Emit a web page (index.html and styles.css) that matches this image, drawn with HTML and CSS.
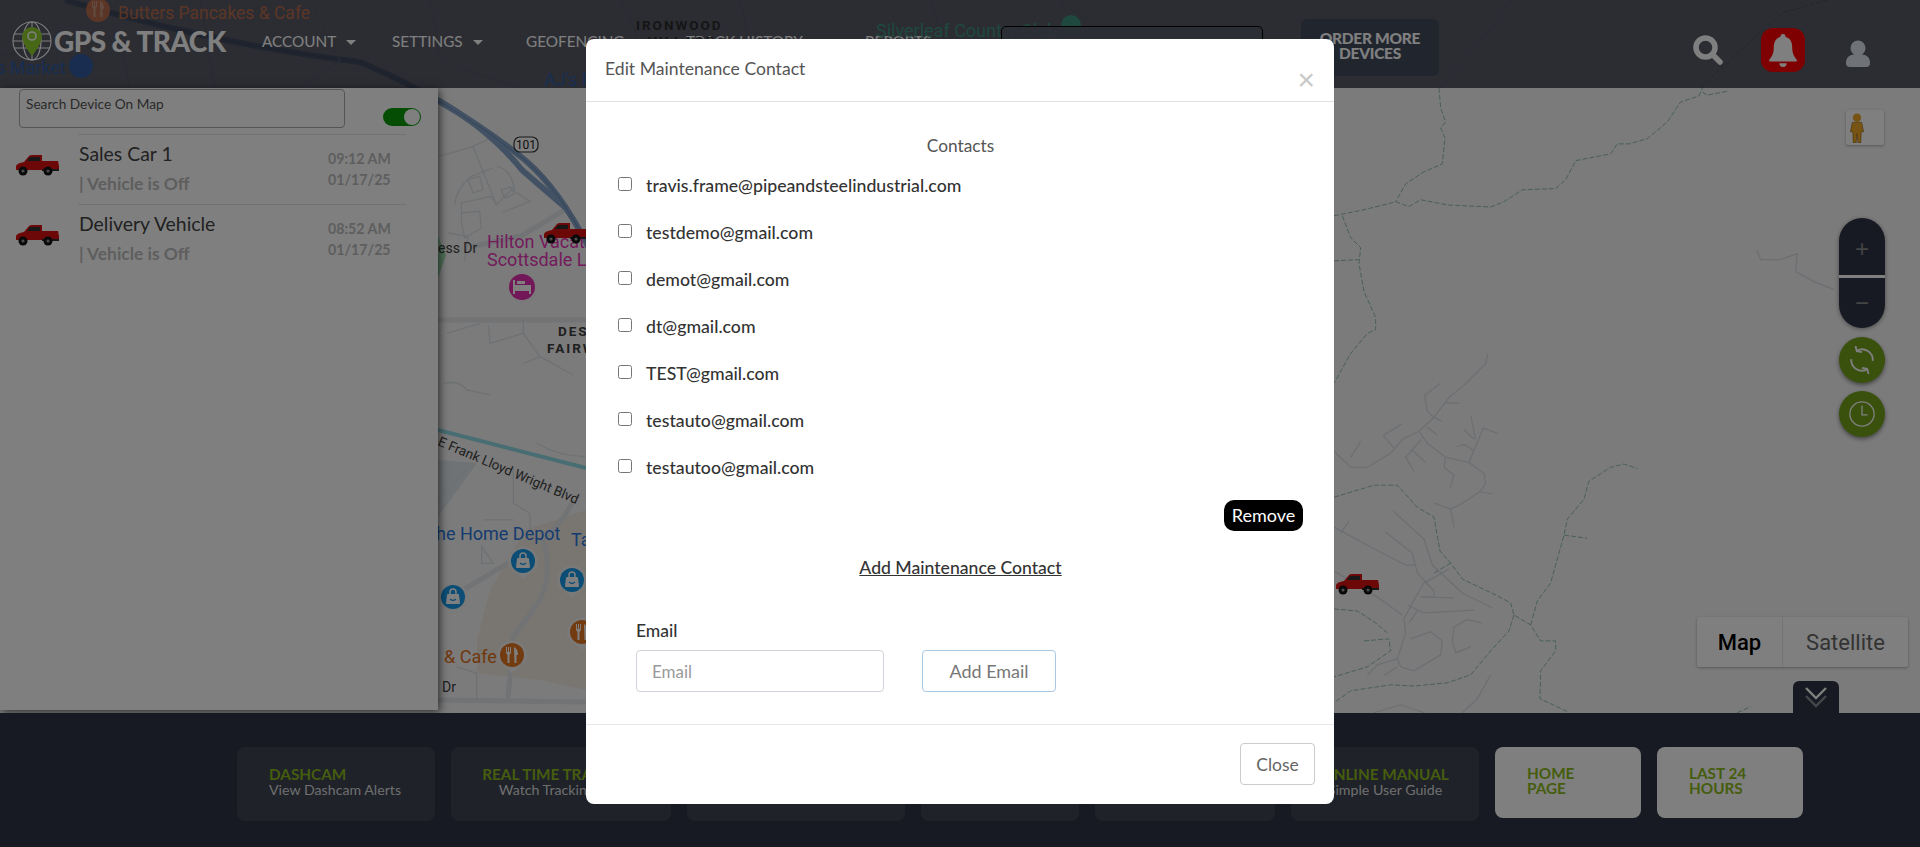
FILE: index.html
```html
<!DOCTYPE html>
<html lang="en">
<head>
    <meta charset="UTF-8">
    <meta name="viewport" content="width=device-width, initial-scale=1.0">
    <title>GPS &amp; Track</title>
    <link rel="stylesheet" href="styles.css">
</head>
<body>
<div class="page">

    <!-- map canvas, everything else sits on top of it -->
    <svg class="map" viewBox="0 0 1920 847" xmlns="http://www.w3.org/2000/svg">
        <defs>
            <g id="truck">
                <path fill="#d81010" d="M1 16 L1 12 Q2 9 9 8 L14 2 Q15 1 17 1 L27 1 L27 7 L43 7 L44 12 L44 16 Z"/>
                <path fill="#303030" d="M15 3 L25 3 L25 7 L12 7 Z M27 15 L44 15 L44 17 L27 17 Z"/>
                <circle fill="#111" cx="8" cy="17" r="4.5"/>
                <circle fill="#999" cx="8" cy="17" r="1.6"/>
                <circle fill="#111" cx="33" cy="17" r="4.5"/>
                <circle fill="#999" cx="33" cy="17" r="1.6"/>
            </g>
            <g id="bag">
                <path fill="#fff" d="M-6 -2 Q-6 -3 -5 -3 L5 -3 Q6 -3 6 -2 L7 6 Q7 7 6 7 L-6 7 Q-7 7 -7 6 Z"/>
                <path fill="none" stroke="#fff" stroke-width="1.5" d="M-3 -3 V-5 A3 3 0 0 1 3 -5 V-3"/>
                <path fill="none" stroke="#169bea" stroke-width="1.2" d="M-3 2 Q0 5 3 2"/>
            </g>
            <g id="fork">
                <path fill="#fff" d="M-6 -8 H-5 V-3 H-4 V-8 H-3 V-3 H-2 V-8 H-1 V-2 L-2.5 0 V8 H-4.5 V0 L-6 -2 Z"/>
                <path fill="#fff" d="M2 -8 Q6 -6 6 0 H4.5 V8 H2.5 Z"/>
            </g>
        </defs>

        <polygon class="map-tan" points="490,590 525,530 586,510 586,690 540,680 477,673 477,640"/>
        <polygon class="map-airport" points="438,460 477,463 438,517"/>
        <polygon class="map-green" points="438,236 446,255 438,278"/>

        <g class="road-wide">
            <path d="M438 320 L586 320"/>
            <path d="M438 700 L586 702"/>
            <path d="M573 500 Q567 517 543 540 Q553 573 540 600 L513 637 L508 700"/>
            <path d="M463 590 L513 560"/>
            <path d="M470 247 L521 236 L568 208"/>
        </g>

        <g class="road-thin" transform="translate(438 88) scale(.3333)">
            <path d="M0 205 Q60 190 105 175 Q150 155 180 135"/>
            <path d="M105 175 L175 350 L225 300"/>
            <path d="M175 235 Q220 240 230 310 L275 340 L190 375"/>
            <path d="M50 350 Q55 300 100 265 L165 240"/>
            <path d="M90 275 L125 265 L135 305 L105 315 Z"/>
            <path d="M190 305 L218 298 L228 318 L200 330 Z"/>
            <path d="M70 345 L160 325 L175 350"/>
            <path d="M70 345 L70 400 L80 450 L130 420 L125 370 L70 375"/>
            <path d="M30 435 L90 445 L80 520"/>
        </g>
        <g class="road-thin" transform="translate(400 200) scale(.3333)">
            <path d="M140 400 L240 370"/>
            <path d="M265 375 L270 430 L370 400 L420 470 L520 525"/>
            <path d="M370 360 L370 400 M370 490 L420 470"/>
            <path d="M130 550 Q180 540 200 570 L270 585"/>
            <path d="M115 900 L200 810"/>
            <path d="M340 800 L340 910 L390 940 L390 1000"/>
            <path d="M250 960 L340 960 M245 1040 L280 1090 L245 1090 Z"/>
            <path d="M170 1400 L230 1420 L230 1500"/>
            <path d="M410 730 Q480 770 555 770"/>
        </g>

        <path class="highway" d="M65 0 Q220 45 360 62 Q450 100 525 160 Q560 190 590 250"/>
        <path class="highway" d="M438 100 Q490 130 522 170 Q545 190 566 208"/>
        <path class="highway-line" d="M65 0 Q220 45 360 62 Q450 100 525 160 Q560 190 590 250"/>
        <path class="teal-road" d="M438 430 L586 468"/>

        <!-- faint streets under the top bar -->
        <g class="road-thin">
            <path d="M0 55 L120 40 L130 88 M200 0 L215 88 M310 0 L340 60 L300 88"/>
            <path d="M430 0 L440 60 L520 88 M620 0 Q650 50 640 88 M740 0 L760 88"/>
            <path d="M930 0 L950 60 M1060 0 Q1090 50 1060 80"/>
            <path d="M1510 0 L1490 30 L1440 88"/>
        </g>
        <path class="trail" d="M1700 88 L1741 50 L1782 13 L1827 0"/>

        <!-- trails and streets east of the dialog -->
        <g class="trail" transform="translate(1334 88) scale(.3333 .3992)">
            <path d="M315 0 L320 50 L335 85 L320 100 L333 125 L325 190 L270 210 L215 240 L185 285"/>
            <path d="M0 320 L90 305 L185 285 L225 297 L260 280 L340 293 L470 298 L510 285 L565 255 L665 252 L695 230 L725 182 L830 165 L850 140 L885 140 L940 127 L1000 85 L1040 35 L1095 20 L1105 0"/>
            <path d="M1105 10 L1120 18 L1180 8"/>
            <path d="M25 320 L50 375 L80 400 L75 440 L90 510 L125 575 L125 605 L100 615 L50 665 L0 740"/>
            <path d="M0 433 L75 430"/>
            <path d="M0 1025 L120 995 L190 995 L250 1050 L300 1075 L318 1160 L350 1190 L385 1230 L490 1272 L530 1290 L540 1320 L590 1345 L620 1385 L665 1385 L665 1410 L620 1460 L618 1530 L700 1562"/>
            <path d="M350 1190 L300 1215"/>
            <path d="M540 1320 L525 1360 L470 1410 L410 1470 L340 1490 L240 1498 L170 1495 L50 1510 L0 1540"/>
            <path d="M590 1345 L610 1285 L650 1240 L690 1120 L700 1080 L750 1030 L765 985 L830 950 L870 942 L910 953"/>
            <path d="M690 1120 L760 1128"/>
            <path d="M0 1305 L70 1310 L125 1340 L160 1365"/>
            <path d="M90 1385 L165 1380 L170 1410 L100 1450 L0 1475"/>
            <path d="M1210 1565 L1250 1550"/>
        </g>
        <g class="street" transform="translate(1334 88) scale(.3333 .3992)">
            <path d="M462 665 L455 690 L390 745 L345 775 L300 825 L255 860 L205 880 L170 915 L100 950 L50 950 L0 910"/>
            <path d="M318 740 L272 770 L280 810 L300 825"/>
            <path d="M335 788 L375 790 M300 825 L325 835 M280 850 L310 870"/>
            <path d="M255 860 L280 890 L335 925 L405 938 L450 965 L455 990 L440 1010 L385 1040 L350 1055 L300 1040"/>
            <path d="M440 1012 L475 1017 M350 1055 L360 1100 M335 925 L330 950 L360 970 L348 1003"/>
            <path d="M148 870 L203 842 M148 870 L180 903 M262 880 L215 925 L240 960 M232 905 L275 938"/>
            <path d="M405 938 L448 852 L493 866 M425 880 L410 820 M420 880 L390 855 M420 908 L390 893 L368 898"/>
            <path d="M178 1060 L270 1130 L295 1195 L385 1265 L475 1302"/>
            <path d="M155 1113 L235 1165 L250 1215 L300 1260 L300 1275 L260 1275"/>
            <path d="M0 1100 L110 1150 L215 1195 L245 1195 M45 1085 L20 1115 M80 885 L50 925"/>
            <path d="M0 1210 L60 1240 L130 1275 L205 1320"/>
            <path d="M345 1205 L270 1240 L235 1290 L210 1330 L215 1365 L190 1430 L200 1450 L240 1460 L320 1420 L325 1385 L290 1362 L230 1380"/>
            <path d="M220 1295 L270 1315 L420 1308 M250 1310 L225 1340 M262 1275 L360 1277"/>
            <path d="M355 1385 L360 1350 L400 1332 L445 1340 M355 1385 L365 1415 L410 1400"/>
            <path d="M190 1430 L130 1445 L100 1470 M190 1450 L150 1472"/>
            <path d="M470 1470 L430 1530 L385 1565 M120 1565 L200 1545 L270 1565"/>
            <path d="M1268 405 L1280 430 L1340 430 L1390 415 L1385 460 L1440 485 L1500 505"/>
        </g>

        <!-- labels -->
        <g class="shield">
            <rect x="514" y="137" width="24" height="15" rx="6"/>
            <text x="526" y="149">101</text>
        </g>
        <text class="label label-road" x="438" y="253">ess Dr</text>
        <text class="label label-hotel" x="487" y="248">Hilton Vacation Club</text>
        <text class="label label-hotel" x="487" y="266">Scottsdale Links</text>
        <text class="label label-area" x="558" y="336">DESERT</text>
        <text class="label label-area" x="547" y="353">FAIRWAYS</text>
        <text class="label label-frank" transform="translate(437 445) rotate(23)">E Frank Lloyd Wright Blvd</text>
        <text class="label label-shop" x="436" y="540">he Home Depot</text>
        <text class="label label-shop" x="571" y="546">Target</text>
        <text class="label label-food" x="444" y="663">&amp; Cafe</text>
        <text class="label label-road" x="442" y="692">Dr</text>
        <text class="label label-reserve" x="1272" y="139">Preserve</text>

        <!-- pins -->
        <g class="pin"><path d="M522 307 L508 293 A15 15 0 1 1 536 293 Z"/><circle class="pin-hotel" cx="522" cy="287" r="13"/><path class="pin-mark" d="M513 280 H515 V285 H531 V294 H529 V291 H515 V294 H513 Z M517 281 H525 V284 H517 Z"/></g>
        <g class="pin"><path d="M523 579 L509 567 A15 15 0 1 1 537 567 Z"/><circle class="pin-shop" cx="523" cy="561" r="12"/><use href="#bag" x="523" y="561"/></g>
        <g class="pin"><path d="M453 615 L439 603 A15 15 0 1 1 467 603 Z"/><circle class="pin-shop" cx="453" cy="597" r="12"/><use href="#bag" x="453" y="597"/></g>
        <g class="pin"><path d="M572 598 L558 586 A15 15 0 1 1 586 586 Z"/><circle class="pin-shop" cx="572" cy="580" r="12"/><use href="#bag" x="572" y="580"/></g>
        <g class="pin"><path d="M512 673 L498 661 A15 15 0 1 1 526 661 Z"/><circle class="pin-food" cx="512" cy="655" r="12"/><use href="#fork" x="512" y="655"/></g>
        <g class="pin"><path d="M582 650 L568 638 A15 15 0 1 1 596 638 Z"/><circle class="pin-food" cx="582" cy="632" r="12"/><use href="#fork" x="582" y="632"/></g>

        <!-- vehicles on the map -->
        <use href="#truck" x="543" y="222"/>
        <use href="#truck" x="1335" y="573"/>
    </svg>

    <nav class="topbar">
        <a class="brand">
            <svg class="brand-globe" viewBox="0 0 40 40">
                <g fill="none" stroke="#fff" stroke-width="1.1">
                    <circle cx="20" cy="20" r="19"/>
                    <ellipse cx="20" cy="20" rx="9" ry="19"/>
                    <path d="M20 1 V39 M2 13 H38 M2 27 H38 M1 20 H39"/>
                </g>
                <path fill="#8fd12c" d="M20 35 Q10 22 10 16 A10 10 0 0 1 30 16 Q30 22 20 35 Z"/>
                <circle fill="none" stroke="#fff" stroke-width="1.6" cx="20" cy="15" r="4"/>
            </svg>
            <span>GPS &amp; TRACK</span>
        </a>
        <a class="nav-link nav-account">ACCOUNT <i class="caret"></i></a>
        <a class="nav-link nav-settings">SETTINGS <i class="caret"></i></a>
        <a class="nav-link nav-geo">GEOFENCING</a>
        <a class="nav-link nav-history">TRACK HISTORY</a>
        <a class="nav-link nav-reports">REPORTS</a>
        <div class="nav-search">Search Device Position</div>
        <a class="order-btn">ORDER MORE<br>DEVICES</a>
        <svg class="nav-icon icon-search" viewBox="0 0 30 30">
            <circle cx="12.5" cy="12.5" r="9.5" fill="none" stroke="#fff" stroke-width="5.5"/>
            <path d="M20 20 L27 27" stroke="#fff" stroke-width="5.5" stroke-linecap="round"/>
        </svg>
        <div class="bell-box">
            <svg viewBox="0 0 30 36" class="bell-icon">
                <path fill="#fff" d="M15 0 A2.6 2.6 0 0 1 17.6 3 C23 4.5 25 9 25 14 C25 21 27 25 30 28 L30 30 L0 30 L0 28 C3 25 5 21 5 14 C5 9 7 4.5 12.4 3 A2.6 2.6 0 0 1 15 0 Z M11 32 H19 A4 4 0 0 1 11 32 Z"/>
            </svg>
        </div>
        <svg class="nav-icon icon-user" viewBox="0 0 24 27">
            <circle cx="12" cy="8" r="7.5" fill="#dfe7ef"/>
            <path fill="#dfe7ef" d="M0 23 C0 16 5 14 12 14 C19 14 24 16 24 23 Q24 27 20 27 H4 Q0 27 0 23 Z"/>
        </svg>
    </nav>

    <!-- map labels that show through the translucent top bar -->
    <svg class="map-over" viewBox="0 0 1920 88" xmlns="http://www.w3.org/2000/svg">
        <circle class="over-food" cx="98" cy="10" r="12"/>
        <use href="#fork" x="98" y="9" opacity=".35"/>
        <circle class="over-shop" cx="81" cy="66" r="12"/>
        <text class="label over-food" x="118" y="19">Butters Pancakes &amp; Cafe</text>
        <text class="label over-shop" x="-4" y="74">s Market</text>
        <text class="label over-shop" x="544" y="86">AJ's Fine Foods</text>
        <text class="label over-area" x="636" y="30">IRONWOOD</text>
        <text class="label over-area" x="648" y="46">VILLAGE</text>
        <text class="label over-park" x="876" y="37">Silverleaf Country Club</text>
        <circle class="over-park" cx="1071" cy="25" r="10"/>
    </svg>

    <main class="middle">
        <aside class="sidebar">
            <div class="side-search">
                <div class="side-input">Search Device On Map</div>
                <div class="toggle"><span></span></div>
            </div>
            <div class="vehicle">
                <svg class="vehicle-icon" viewBox="0 0 45 22"><use href="#truck"/></svg>
                <div class="vehicle-body">
                    <div>
                        <div class="vehicle-name">Sales Car 1</div>
                        <div class="vehicle-status">| Vehicle is Off</div>
                    </div>
                    <div class="vehicle-time">09:12 AM<br>01/17/25</div>
                </div>
            </div>
            <div class="vehicle">
                <svg class="vehicle-icon" viewBox="0 0 45 22"><use href="#truck"/></svg>
                <div class="vehicle-body">
                    <div>
                        <div class="vehicle-name">Delivery Vehicle</div>
                        <div class="vehicle-status">| Vehicle is Off</div>
                    </div>
                    <div class="vehicle-time">08:52 AM<br>01/17/25</div>
                </div>
            </div>
        </aside>

        <div class="pegman">
            <svg viewBox="0 0 16 32" width="16" height="30">
                <circle cx="8" cy="5" r="4.5" fill="#f0a828"/>
                <path fill="#f0a828" stroke="#8a5a10" stroke-width=".6" d="M3 10 H13 L15 20 L12.5 20 L12 32 H9 L8 22 L7 32 H4 L3.5 20 L1 20 Z"/>
            </svg>
        </div>

        <div class="map-tools">
            <div class="zoom-pill">
                <span>+</span>
                <span>&minus;</span>
            </div>
            <div class="round-tool">
                <svg viewBox="0 0 30 30" width="28" height="28" fill="none" stroke="#fff" stroke-width="2">
                    <path d="M9.5 5 A11.5 11.5 0 0 1 26.5 16"/>
                    <path d="M20.5 25 A11.5 11.5 0 0 1 3.5 14"/>
                    <path d="M8 0 L9.5 5.5 L15 6.5"/>
                    <path d="M22 30 L20.5 24.5 L15 23.5"/>
                </svg>
            </div>
            <div class="round-tool">
                <svg viewBox="0 0 30 30" width="28" height="28" fill="none" stroke="#fff" stroke-width="1.4">
                    <circle cx="15" cy="15" r="13"/>
                    <path d="M15 6 V16 H21"/>
                </svg>
            </div>
        </div>

        <div class="map-type">
            <span class="map-type-on">Map</span>
            <span>Satellite</span>
        </div>

        <div class="collapse-tab">
            <svg viewBox="0 0 24 22" width="24" height="22" fill="none" stroke-width="2.4">
                <path stroke="#fff" d="M2 2 L12 12 L22 2"/>
                <path stroke="#8c8f96" d="M2 10 L12 20 L22 10"/>
            </svg>
        </div>
    </main>

    <footer class="bottombar">
        <a class="tile tile-left"><b>DASHCAM</b><span>View Dashcam Alerts</span></a>
        <a class="tile"><b>REAL TIME TRACKING</b><span>Watch Tracking Live</span></a>
        <a class="tile"></a>
        <a class="tile"></a>
        <a class="tile"></a>
        <a class="tile"><b>ONLINE MANUAL</b><span>Simple User Guide</span></a>
        <a class="tile-light"><b>HOME<br>PAGE</b></a>
        <a class="tile-light"><b>LAST 24<br>HOURS</b></a>
    </footer>

    <div class="backdrop"></div>

    <div class="modal-wrap">
        <div class="modal">
            <div class="modal-head">
                <h5>Edit Maintenance Contact</h5>
                <span class="modal-x">&times;</span>
            </div>
            <div class="modal-body">
                <div class="contacts-title">Contacts</div>
                <label class="contact"><input type="checkbox"><span>travis.frame@pipeandsteelindustrial.com</span></label>
                <label class="contact"><input type="checkbox"><span>testdemo@gmail.com</span></label>
                <label class="contact"><input type="checkbox"><span>demot@gmail.com</span></label>
                <label class="contact"><input type="checkbox"><span>dt@gmail.com</span></label>
                <label class="contact"><input type="checkbox"><span>TEST@gmail.com</span></label>
                <label class="contact"><input type="checkbox"><span>testauto@gmail.com</span></label>
                <label class="contact"><input type="checkbox"><span>testautoo@gmail.com</span></label>
                <div class="remove-row"><button class="btn-remove">Remove</button></div>
                <div class="add-title">Add Maintenance Contact</div>
                <div class="add-form">
                    <div class="add-field">
                        <label for="email">Email</label>
                        <input id="email" type="text" placeholder="Email">
                    </div>
                    <button class="btn-add">Add Email</button>
                </div>
            </div>
            <div class="modal-foot">
                <button class="btn-close">Close</button>
            </div>
        </div>
    </div>
</div>
</body>
</html>
```

FILE: styles.css
```css
* {
    box-sizing: border-box;
}
html, body {
    margin: 0;
    height: 100%;
}
body {
    font-family: Lato, "Open Sans", sans-serif;
    color: #212529;
    background-color: #f6f6f6;
}
.page {
    position: relative;
    width: 1920px;
    height: 847px;
    overflow: hidden;
    display: grid;
    grid-template-rows: 88px 625px 134px;
}

/* map */
.map {
    position: absolute;
    left: 0;
    top: 0;
    width: 1920px;
    height: 847px;
}
.map-over {
    position: absolute;
    left: 0;
    top: 0;
    width: 1920px;
    height: 88px;
    opacity: 0.85;
}
.map path, .map rect {
    vector-effect: non-scaling-stroke;
}
.map-tan { fill: #f3ede3; }
.map-airport { fill: #e0e6ec; }
.map-green { fill: #a0e0b0; }
.road-wide path {
    fill: none;
    stroke: #e2e6ea;
    stroke-width: 5;
}
.road-thin path {
    fill: none;
    stroke: #dce2e8;
    stroke-width: 1.3;
}
.highway {
    fill: none;
    stroke: #84a4c8;
    stroke-width: 6;
}
.highway-line {
    fill: none;
    stroke: #6c8cb0;
    stroke-width: 1;
}
.teal-road {
    fill: none;
    stroke: #90dce6;
    stroke-width: 4;
}
.trail, .trail path {
    fill: none;
    stroke: #93c0ad;
    stroke-width: 1;
    stroke-dasharray: 5 2;
}
.street path {
    fill: none;
    stroke: #d6dce4;
    stroke-width: 1.2;
}
.label {
    font-family: Roboto, sans-serif;
}
.label-food { font-size: 18px; fill: #e2701a; }
.label-shop { font-size: 18px; fill: #2a78e0; }
.label-road { font-size: 14px; fill: #404040; }
.label-frank { font-size: 13.5px; fill: #404040; }
.label-hotel { font-size: 18px; fill: #e636b8; }
.label-area { font-size: 13.5px; font-weight: 700; letter-spacing: 2px; fill: #404040; }
.label-reserve { font-size: 15px; font-style: italic; fill: #148a60; }
.over-food { font-size: 17.5px; fill: #c87048; }
.over-shop { font-size: 18px; fill: #2a5cac; }
.over-area { font-size: 13.5px; font-weight: 700; letter-spacing: 2px; fill: #222; }
.over-park { font-size: 18px; fill: #3a9a80; }
.shield rect {
    fill: #fff;
    stroke: #333;
    stroke-width: 1.2;
}
.shield text {
    font-family: Roboto, sans-serif;
    font-size: 12px;
    text-anchor: middle;
    fill: #222;
}
.pin path { fill: #f4f4f4; }
.pin-food { fill: #e67620; }
.pin-shop { fill: #169bea; }
.pin-hotel { fill: #e430b0; }
.pin path.pin-mark { fill: #fff; }

/* top bar */
.topbar {
    position: relative;
    display: flex;
    align-items: center;
    height: 88px;
    background-color: rgba(44, 46, 62, 0.78);
    color: #fff;
}
.brand {
    display: flex;
    align-items: center;
    width: 262px;
    margin-bottom: 6px;
    padding-left: 12px;
    font-size: 28px;
    font-weight: 900;
    letter-spacing: -0.6px;
    color: #fff;
    white-space: nowrap;
}
.brand-globe {
    width: 40px;
    height: 40px;
    margin-right: 2px;
}
.nav-link {
    margin-bottom: 6px;
    font-size: 15.3px;
    white-space: nowrap;
}
.nav-account { width: 130px; }
.nav-settings { width: 134px; }
.nav-geo { width: 160px; }
.nav-history { width: 179px; }
.nav-reports { width: 136px; }
.caret {
    display: inline-block;
    margin-left: 6px;
    vertical-align: 2px;
    border-top: 5px solid #fff;
    border-left: 5px solid transparent;
    border-right: 5px solid transparent;
}
.nav-search {
    position: relative;
    z-index: 1;
    align-self: flex-start;
    width: 262px;
    height: 44px;
    margin-top: 26px;
    margin-right: 38px;
    padding: 8px 12px;
    font-size: 14px;
    color: #ccc;
    background-color: rgba(88, 92, 106, 0.9);
    border: 1px solid #000;
    border-radius: 5px;
}
.order-btn {
    width: 138px;
    height: 57px;
    margin-top: 7px;
    margin-right: 254px;
    padding-top: 12px;
    font-size: 15.5px;
    font-weight: 900;
    line-height: 15px;
    letter-spacing: -0.3px;
    text-align: center;
    color: #fff;
    background-color: #424a5d;
    border-radius: 6px;
}
.nav-icon {
    display: block;
}
.icon-search {
    width: 30px;
    height: 30px;
    margin-right: 38px;
    margin-top: 12px;
}
.bell-box {
    display: flex;
    align-items: center;
    justify-content: center;
    align-self: flex-start;
    width: 44px;
    height: 44px;
    margin-top: 28px;
    margin-right: 41px;
    background-color: #ff0000;
    border-radius: 12px;
}
.bell-icon {
    width: 30px;
    height: 33px;
}
.icon-user {
    width: 24px;
    height: 27px;
    margin-top: 19px;
}

/* middle area */
.middle {
    position: relative;
}
.sidebar {
    position: relative;
    width: 438px;
    height: 622px;
    background-color: #fff;
    box-shadow: 2px 2px 8px rgba(0, 0, 0, 0.6);
}
.side-search {
    display: flex;
    align-items: center;
    height: 46px;
    padding: 1px 0 0 19px;
}
.side-input {
    width: 326px;
    height: 39px;
    margin-top: -6px;
    padding: 5px 6px;
    font-size: 13.7px;
    color: #555;
    border: 1px solid #aaa;
    border-radius: 4px;
}
.toggle {
    position: relative;
    width: 38px;
    height: 18px;
    margin-top: 10px;
    margin-left: 38px;
    background-color: #0a9a0a;
    border-radius: 9px;
}
.toggle span {
    position: absolute;
    right: 1px;
    top: 1px;
    width: 16px;
    height: 16px;
    background-color: #fff;
    border-radius: 50%;
}
.vehicle {
    display: flex;
    height: 70px;
}
.vehicle-icon {
    width: 45px;
    height: 22px;
    margin: 20px 18px 0 15px;
}
.vehicle-body {
    display: flex;
    justify-content: space-between;
    width: 328px;
    padding-left: 1px;
    border-top: 1px solid #e4e4e4;
}
.vehicle-name {
    margin-top: 6px;
    font-size: 19.4px;
    line-height: 26px;
    color: #444;
}
.vehicle-status {
    margin-top: 4px;
    font-size: 17.4px;
    font-weight: 700;
    line-height: 26px;
    color: #bdbdbd;
}
.vehicle-time {
    width: 78px;
    margin-top: 13px;
    font-size: 14.2px;
    font-weight: 700;
    line-height: 21px;
    color: #bdbdbd;
}

/* map controls */
.pegman {
    position: absolute;
    right: 36px;
    top: 22px;
    display: flex;
    align-items: center;
    width: 38px;
    height: 35px;
    padding-left: 3px;
    background-color: #fff;
    border-radius: 2px;
    box-shadow: 0 1px 3px rgba(0, 0, 0, 0.3);
}
.map-tools {
    position: absolute;
    right: 35px;
    top: 130px;
    display: flex;
    flex-direction: column;
    gap: 8px;
    width: 46px;
}
.zoom-pill {
    display: flex;
    flex-direction: column;
    height: 110px;
    margin-bottom: 1px;
    overflow: hidden;
    font-family: "Liberation Sans", sans-serif;
    font-size: 24px;
    color: #888;
    background-color: #2e3446;
    border-radius: 23px;
    box-shadow: 0 1px 4px rgba(0, 0, 0, 0.4);
}
.zoom-pill span {
    flex: 1;
    display: flex;
    align-items: center;
    justify-content: center;
}
.zoom-pill span:first-child {
    padding-top: 6px;
    border-bottom: 3px solid #fff;
}
.round-tool {
    display: flex;
    align-items: center;
    justify-content: center;
    width: 46px;
    height: 46px;
    background-color: #74a01a;
    border-radius: 50%;
    box-shadow: 0 2px 4px rgba(0, 0, 0, 0.45);
}
.map-type {
    position: absolute;
    right: 12px;
    top: 529px;
    display: flex;
    width: 211px;
    height: 50px;
    font-family: Roboto, sans-serif;
    font-size: 22px;
    color: #666;
    background-color: #fff;
    border-radius: 2px;
    box-shadow: 0 1px 3px rgba(0, 0, 0, 0.3);
}
.map-type span {
    display: flex;
    align-items: center;
    justify-content: center;
    flex: 1;
}
.map-type .map-type-on {
    flex: 0 0 86px;
    font-weight: 500;
    color: #000;
    border-right: 1px solid #e8e8e8;
}
.collapse-tab {
    position: absolute;
    right: 81px;
    bottom: 0;
    display: flex;
    align-items: center;
    justify-content: center;
    width: 46px;
    height: 32px;
    background-color: #2e3446;
    border-radius: 6px 6px 0 0;
}

/* bottom bar */
.bottombar {
    position: relative;
    display: grid;
    grid-template-columns: 198px 220px 218px 158px 180px 188px 146px 146px;
    gap: 16px;
    align-items: start;
    padding: 34px 0 0 237px;
    background-color: #2e3446;
}
.tile {
    display: flex;
    flex-direction: column;
    align-items: center;
    justify-content: center;
    height: 74px;
    padding-bottom: 4px;
    font-size: 14.2px;
    line-height: 16px;
    color: #ddd;
    background-color: #3e4453;
    border-radius: 8px;
    white-space: nowrap;
}
.tile b, .tile-light b {
    font-size: 15.3px;
    font-weight: 700;
    color: #8cba1c;
}
.tile-left {
    align-items: flex-start;
    padding-left: 32px;
}
.tile-light {
    display: flex;
    align-items: center;
    height: 71px;
    padding: 0 0 4px 32px;
    line-height: 15px;
    background-color: #fff;
    border-radius: 8px;
}

/* dialog */
.backdrop {
    position: absolute;
    z-index: 2;
    left: 0;
    top: 0;
    width: 100%;
    height: 100%;
    background-color: rgba(0, 0, 0, 0.5);
}
.modal-wrap {
    position: absolute;
    z-index: 3;
    left: 0;
    top: 0;
    width: 100%;
    height: 100%;
    display: flex;
    justify-content: center;
    align-items: flex-start;
    padding-top: 39px;
}
.modal {
    display: flex;
    flex-direction: column;
    width: 748px;
    height: 765px;
    background-color: #fff;
    border-radius: 8px;
}
.modal-head {
    display: flex;
    justify-content: space-between;
    height: 63px;
    padding: 18px 19px 0 19px;
    border-bottom: 1px solid #dee2e6;
}
.modal-head h5 {
    margin: 0;
    font-size: 17.6px;
    font-weight: 400;
    line-height: 24px;
    color: #555;
}
.modal-x {
    margin-top: 8px;
    font-family: "Liberation Sans", sans-serif;
    font-size: 30px;
    line-height: 30px;
    color: #c8c8c8;
}
.modal-body {
    flex: 1;
    padding: 32px 31px 0 32px;
}
.contacts-title {
    height: 41px;
    font-size: 17.3px;
    line-height: 24px;
    text-align: center;
    color: #555;
}
.contact {
    display: flex;
    align-items: flex-start;
    height: 47px;
    font-size: 17.7px;
    font-weight: 500;
    line-height: 22px;
    color: #333;
}
.contact input {
    width: 14px;
    height: 14px;
    margin: 2px 14px 0 0;
}
.remove-row {
    display: flex;
    justify-content: flex-end;
    height: 31px;
    margin-top: -4px;
}
.btn-remove {
    width: 79px;
    height: 31px;
    padding: 0 0 2px;
    font-family: inherit;
    font-size: 18px;
    color: #fff;
    background-color: #000;
    border: none;
    border-radius: 10px;
}
.add-title {
    margin-top: 25px;
    font-size: 17.6px;
    font-weight: 500;
    line-height: 24px;
    text-align: center;
    text-decoration: underline;
    color: #333;
}
.add-form {
    display: flex;
    align-items: flex-end;
    gap: 38px;
    margin-top: 39px;
    padding-left: 18px;
}
.add-field label {
    display: block;
    margin-bottom: 7px;
    font-size: 17.5px;
    font-weight: 500;
    line-height: 24px;
    color: #333;
}
.add-field input {
    display: block;
    width: 248px;
    height: 42px;
    padding: 0 15px;
    font-family: inherit;
    font-size: 17px;
    border: 1px solid #ced4da;
    border-radius: 4px;
}
.add-field input::placeholder {
    color: #9a9a9a;
}
.btn-add {
    width: 134px;
    height: 42px;
    font-family: inherit;
    font-size: 18px;
    color: #777;
    background-color: #fff;
    border: 1px solid #a9c8e6;
    border-radius: 4px;
}
.modal-foot {
    display: flex;
    justify-content: flex-end;
    height: 80px;
    padding: 18px 19px 0 0;
    border-top: 1px solid #e4e7ea;
}
.btn-close {
    width: 75px;
    height: 42px;
    font-family: inherit;
    font-size: 17.5px;
    color: #666;
    background-color: #fff;
    border: 1px solid #ccc;
    border-radius: 4px;
}
```
